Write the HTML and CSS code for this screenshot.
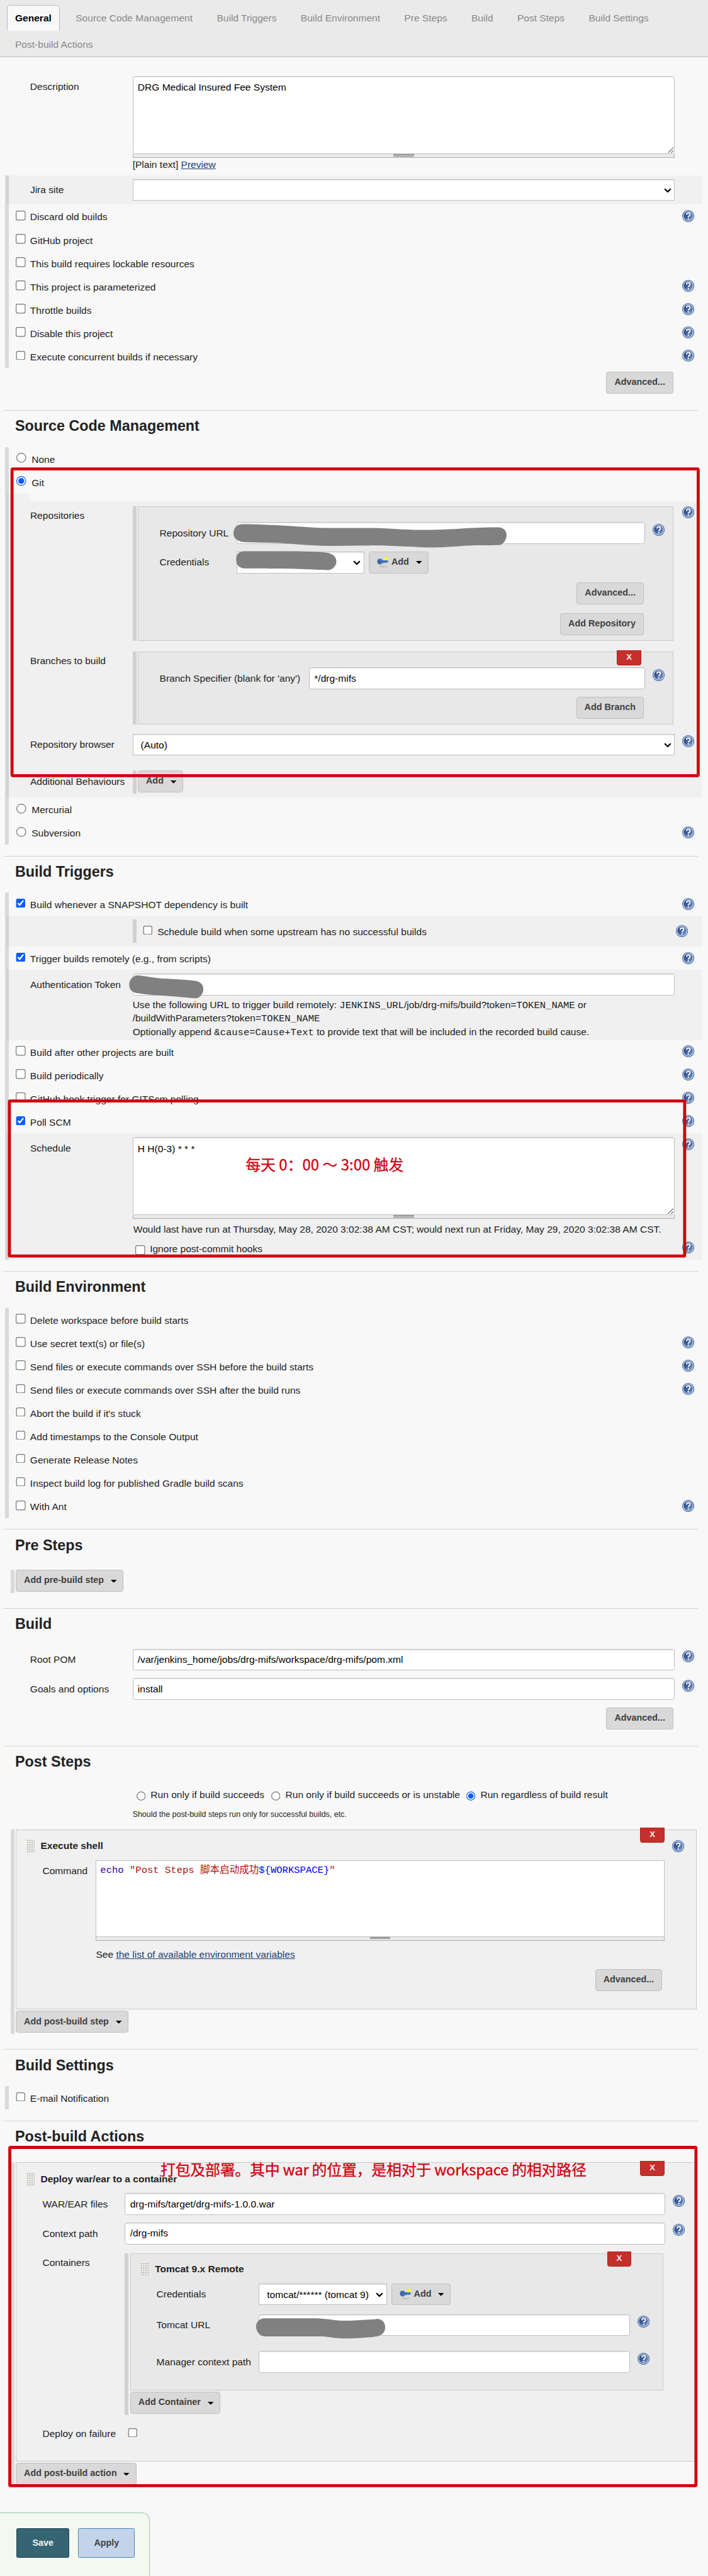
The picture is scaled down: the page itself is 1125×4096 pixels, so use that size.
FILE: index.html
```html
<!DOCTYPE html>
<html lang="en">
<head>
<meta charset="utf-8">
<title>drg-mifs Config [Jenkins]</title>
<link rel="stylesheet" href="styles.css">
</head>
<body>
<svg class="defs" aria-hidden="true">
  <defs>
    <linearGradient id="g-help" x1="0" y1="0" x2="1" y2="1"><stop offset="0.15" stop-color="#1d3d7c"/><stop offset="1" stop-color="#7f9fd0"/></linearGradient>
    <symbol id="i-help" viewBox="0 0 16 16">
      <circle cx="8" cy="8" r="8" fill="#4a6da6"/>
      <circle cx="8" cy="8" r="6.5" fill="url(#g-help)" stroke="#c9d6ea" stroke-width="1.1"/>
      <path d="M5.7 6.2C5.7 4.6 6.7 3.8 8.1 3.8s2.4.8 2.4 2.1c0 1.6-2.3 1.8-2.3 3.8" fill="none" stroke="#fff" stroke-width="1.6"/>
      <rect x="7.2" y="10.9" width="1.8" height="1.8" fill="#fff"/>
    </symbol>
    <symbol id="i-key" viewBox="0 0 16 16">
      <ellipse cx="8" cy="14" rx="6" ry="1" fill="#bdbdbd"/>
      <circle cx="12.3" cy="3.2" r="2.4" fill="#fbf43c"/>
      <path d="M3.8 3.6c2 0 3.2 1 3.6 2.2h7.2v2.8l-1 .5-.9-.7-1 .9-1-.7-1 .7H7.2c-.6 1.2-1.8 2-3.4 2C1.700 11.300.3 9.700.3 7.500s1.400-3.900 3.500-3.900z" fill="#4272b8"/>
      <circle cx="3" cy="7.500" r="1.200" fill="#2d5288"/>
    </symbol>
    <symbol id="i-chev" viewBox="0 0 10 6"><path d="M1 1l4 4 4-4" fill="none" stroke="#000" stroke-width="1.900"/></symbol>
    <symbol id="i-tri" viewBox="0 0 8 4"><path d="M0 0h8L4 4z" fill="#000"/></symbol>
    <symbol id="i-size" viewBox="0 0 8 8"><path d="M0.500 7.500l7-7M4.500 7.500l3-3" fill="none" stroke="#555" stroke-width="0.900"/></symbol>
  </defs>
</svg>
<div class="page">
  <nav class="tabs">
    <a class="tab active">General</a><a class="tab">Source Code Management</a><a class="tab">Build Triggers</a><a class="tab">Build Environment</a><a class="tab">Pre Steps</a><a class="tab">Build</a><a class="tab">Post Steps</a><a class="tab">Build Settings</a><a class="tab">Post-build Actions</a>
  </nav>

  <section class="general">
    <div class="field">
      <label>Description</label>
      <div>
        <div class="textarea">DRG Medical Insured Fee System<svg class="size"><use href="#i-size"/></svg></div>
        <div class="handle"><i></i></div>
        <p class="markup">[Plain text] <a>Preview</a></p>
      </div>
    </div>
    <div class="opts">
      <div class="shade padded"><div class="field"><label>Jira site</label><div class="select"><svg class="chev"><use href="#i-chev"/></svg></div></div></div>
      <div class="row"><input type="checkbox"><span>Discard old builds</span><svg class="help"><use href="#i-help"/></svg></div>
      <div class="row"><input type="checkbox"><span>GitHub project</span></div>
      <div class="row"><input type="checkbox"><span>This build requires lockable resources</span></div>
      <div class="row"><input type="checkbox"><span>This project is parameterized</span><svg class="help"><use href="#i-help"/></svg></div>
      <div class="row"><input type="checkbox"><span>Throttle builds</span><svg class="help"><use href="#i-help"/></svg></div>
      <div class="row"><input type="checkbox"><span>Disable this project</span><svg class="help"><use href="#i-help"/></svg></div>
      <div class="row"><input type="checkbox"><span>Execute concurrent builds if necessary</span><svg class="help"><use href="#i-help"/></svg></div>
    </div>
    <div class="actions top5"><button>Advanced...</button></div>
  </section>

  <section class="after-button">
    <h2>Source Code Management</h2>
    <div class="opts">
      <div class="row radio"><input type="radio" name="scm"><span>None</span></div>
      <div class="row radio"><input type="radio" name="scm" checked><span>Git</span></div>
      <div class="shade stub"></div>
      <div class="shade git">
        <div class="field group-field">
          <label>Repositories</label>
          <div class="group">
            <div class="box repo">
              <div class="field"><label>Repository URL</label><div class="input"></div><svg class="help"><use href="#i-help"/></svg></div>
              <div class="field"><label>Credentials</label><div class="inline"><div class="select cred"><svg class="chev"><use href="#i-chev"/></svg></div><button class="key"><svg class="k"><use href="#i-key"/></svg>Add<svg class="tri"><use href="#i-tri"/></svg></button></div></div>
              <div class="actions"><button>Advanced...</button></div>
              <div class="actions"><button>Add Repository</button></div>
            </div>
          </div>
          <svg class="help"><use href="#i-help"/></svg>
        </div>
        <div class="field group-field branches">
          <label>Branches to build</label>
          <div class="group">
            <div class="box branch">
              <span class="delete">X</span>
              <div class="field"><label>Branch Specifier (blank for 'any')</label><div class="input">*/drg-mifs</div><svg class="help"><use href="#i-help"/></svg></div>
              <div class="actions"><button>Add Branch</button></div>
            </div>
          </div>
        </div>
        <div class="field browser"><label>Repository browser</label><div class="select">(Auto)<svg class="chev"><use href="#i-chev"/></svg></div><svg class="help"><use href="#i-help"/></svg></div>
        <div class="field additional"><label>Additional Behaviours</label><div class="group"><button>Add<svg class="tri"><use href="#i-tri"/></svg></button></div></div>
      </div>
      <div class="row radio"><input type="radio" name="scm"><span>Mercurial</span></div>
      <div class="row radio"><input type="radio" name="scm"><span>Subversion</span><svg class="help"><use href="#i-help"/></svg></div>
    </div>
  </section>

  <section>
    <h2>Build Triggers</h2>
    <div class="opts">
      <div class="row"><input type="checkbox" checked><span>Build whenever a SNAPSHOT dependency is built</span><svg class="help"><use href="#i-help"/></svg></div>
      <div class="shade padded"><div class="upstream"><div class="row"><input type="checkbox"><span>Schedule build when some upstream has no successful builds</span><svg class="help"><use href="#i-help"/></svg></div></div></div>
      <div class="row"><input type="checkbox" checked><span>Trigger builds remotely (e.g., from scripts)</span><svg class="help"><use href="#i-help"/></svg></div>
      <div class="shade padded token">
        <div class="field"><label>Authentication Token</label>
          <div><div class="input"></div>
            <p>Use the following URL to trigger build remotely: <code>JENKINS_URL</code>/job/drg-mifs/build?token=<code>TOKEN_NAME</code> or<br>/buildWithParameters?token=<code>TOKEN_NAME</code><br>Optionally append <code>&amp;cause=Cause+Text</code> to provide text that will be included in the recorded build cause.</p>
          </div>
        </div>
      </div>
      <div class="row"><input type="checkbox"><span>Build after other projects are built</span><svg class="help"><use href="#i-help"/></svg></div>
      <div class="row"><input type="checkbox"><span>Build periodically</span><svg class="help"><use href="#i-help"/></svg></div>
      <div class="row"><input type="checkbox"><span>GitHub hook trigger for GITScm polling</span><svg class="help"><use href="#i-help"/></svg></div>
      <div class="row"><input type="checkbox" checked><span>Poll SCM</span><svg class="help"><use href="#i-help"/></svg></div>
      <div class="shade padded poll">
        <div class="field"><label>Schedule</label>
          <div>
            <div class="textarea">H H(0-3) * * *<svg class="size"><use href="#i-size"/></svg></div>
            <div class="handle"><i></i></div>
            <p>Would last have run at Thursday, May 28, 2020 3:02:38 AM CST; would next run at Friday, May 29, 2020 3:02:38 AM CST.</p>
          </div>
          <svg class="help"><use href="#i-help"/></svg>
        </div>
        <div class="ignore"><input type="checkbox"><span>Ignore post-commit hooks</span><svg class="help"><use href="#i-help"/></svg></div>
      </div>
    </div>
  </section>

  <section>
    <h2>Build Environment</h2>
    <div class="opts">
      <div class="row"><input type="checkbox"><span>Delete workspace before build starts</span></div>
      <div class="row"><input type="checkbox"><span>Use secret text(s) or file(s)</span><svg class="help"><use href="#i-help"/></svg></div>
      <div class="row"><input type="checkbox"><span>Send files or execute commands over SSH before the build starts</span><svg class="help"><use href="#i-help"/></svg></div>
      <div class="row"><input type="checkbox"><span>Send files or execute commands over SSH after the build runs</span><svg class="help"><use href="#i-help"/></svg></div>
      <div class="row"><input type="checkbox"><span>Abort the build if it's stuck</span></div>
      <div class="row"><input type="checkbox"><span>Add timestamps to the Console Output</span></div>
      <div class="row"><input type="checkbox"><span>Generate Release Notes</span></div>
      <div class="row"><input type="checkbox"><span>Inspect build log for published Gradle build scans</span></div>
      <div class="row"><input type="checkbox"><span>With Ant</span><svg class="help"><use href="#i-help"/></svg></div>
    </div>
  </section>

  <section class="pre-steps">
    <h2>Pre Steps</h2>
    <div class="steps"><button>Add pre-build step<svg class="tri"><use href="#i-tri"/></svg></button></div>
  </section>

  <section class="build">
    <h2>Build</h2>
    <div class="field"><label>Root POM</label><div class="input">/var/jenkins_home/jobs/drg-mifs/workspace/drg-mifs/pom.xml</div><svg class="help"><use href="#i-help"/></svg></div>
    <div class="field"><label>Goals and options</label><div class="input">install</div><svg class="help"><use href="#i-help"/></svg></div>
    <div class="actions"><button>Advanced...</button></div>
  </section>

  <section class="after-button">
    <h2>Post Steps</h2>
    <div class="run-if">
      <input type="radio" name="run"><span class="r1">Run only if build succeeds</span>
      <input type="radio" name="run"><span class="r2">Run only if build succeeds or is unstable</span>
      <input type="radio" name="run" checked><span>Run regardless of build result</span>
    </div>
    <p class="note">Should the post-build steps run only for successful builds, etc.</p>
    <div class="steps">
      <div class="box step shell">
        <span class="delete">X</span>
        <div class="title"><i class="grip"></i><b>Execute shell</b><svg class="help"><use href="#i-help"/></svg></div>
        <div class="field"><label>Command</label>
          <div>
            <div class="editor"><span class="cmd">echo</span> <span class="str">"Post Steps 脚本启动成功</span><span class="var">${WORKSPACE}</span><span class="str">"</span></div>
            <div class="handle"><i></i></div>
            <p>See <a>the list of available environment variables</a></p>
          </div>
        </div>
        <div class="actions"><button>Advanced...</button></div>
      </div>
      <button>Add post-build step<svg class="tri"><use href="#i-tri"/></svg></button>
    </div>
  </section>

  <section class="after-steps">
    <h2>Build Settings</h2>
    <div class="opts"><div class="row"><input type="checkbox"><span>E-mail Notification</span></div></div>
  </section>

  <section class="post-build">
    <h2>Post-build Actions</h2>
    <div class="steps">
      <div class="box step deploy">
        <span class="delete">X</span>
        <div class="title"><i class="grip"></i><b>Deploy war/ear to a container</b></div>
        <div class="field"><label>WAR/EAR files</label><div class="input">drg-mifs/target/drg-mifs-1.0.0.war</div><svg class="help"><use href="#i-help"/></svg></div>
        <div class="field"><label>Context path</label><div class="input">/drg-mifs</div><svg class="help"><use href="#i-help"/></svg></div>
        <div class="field group-field"><label>Containers</label>
          <div class="group">
            <div class="box tomcat">
              <span class="delete">X</span>
              <div class="title"><i class="grip"></i><b>Tomcat 9.x Remote</b></div>
              <div class="field"><label>Credentials</label><div class="inline"><div class="select cred">tomcat/****** (tomcat 9)<svg class="chev"><use href="#i-chev"/></svg></div><button class="key"><svg class="k"><use href="#i-key"/></svg>Add<svg class="tri"><use href="#i-tri"/></svg></button></div></div>
              <div class="field"><label>Tomcat URL</label><div class="input"></div><svg class="help"><use href="#i-help"/></svg></div>
              <div class="field"><label>Manager context path</label><div class="input"></div><svg class="help"><use href="#i-help"/></svg></div>
            </div>
            <button>Add Container<svg class="tri"><use href="#i-tri"/></svg></button>
          </div>
        </div>
        <div class="field failure"><label>Deploy on failure</label><input type="checkbox"></div>
      </div>
      <button>Add post-build action<svg class="tri"><use href="#i-tri"/></svg></button>
    </div>
  </section>

  <div class="savebar"><button class="save">Save</button><button class="apply">Apply</button></div>

  <svg class="marks" viewBox="0 0 940 3422" aria-hidden="true">
    <g class="blot">
      <path d="M321 696.500C334 696 350 697 362 697.500S400 700 420 701S470 701 495 701.500S535 704 557 704S600 703 615 702S650 700.700 662 700.700C668 701 672.600 705 672.600 711S668 724 662 724.300S630 724 617 725S590 727.300 575 727.300S555 726.500 540 726S515 724.500 498 724.600S450 725.500 426 725S390 722.500 372 721.600S335 721 322 720C315 719 310 715 310 709S313 697 321 696.500Z"/>
      <path d="M323 732.400H384C405 732.500 425 733 435 734.500C442 736 446.600 740 446.600 746S441 757.500 436 757.400S410 756.500 396 756S345 755.500 323 755.200C317 754 313.500 750 313.500 743.500S317 733 323 732.400Z"/>
      <path d="M183 1296C190 1296.500 200 1298.500 210 1299.500S245 1301 261 1303.500C267 1305 270 1309 270 1314.500S265 1326.500 260 1326.300S225 1323 210 1322.300S190 1320.500 181 1319.400C175 1318 171.500 1314 171.500 1308S177 1295.500 183 1296Z"/>
      <path d="M350 3080H415C435 3080 443 3083.300 458.600 3083.300S480 3082 490 3081.800S498 3081 502 3081C508 3082 511.400 3086 511.400 3092S508 3102 502 3103.700S475 3106.800 458.600 3106.800S440 3104.500 425.600 3104H350.700C344 3103 340 3097 340 3091S344 3081 350 3080Z"/>
    </g>
    <g class="frame">
      <rect x="16" y="623" width="911" height="407.500" rx="1"/>
      <rect x="12.500" y="1462.700" width="896.500" height="206" rx="1"/>
      <rect x="13" y="2853" width="911" height="449.500" rx="1"/>
    </g>
  </svg>
  <p class="memo memo-cron">每天 0：00 ～ 3:00 触发</p>
  <p class="memo memo-war">打包及部署。其中 war 的位置，是相对于 workspace 的相对路径</p>
</div>
</body>
</html>
```
FILE: styles.css
```css
* { box-sizing: border-box; }
body { margin: 0; background: #f8f8f8; }
.defs { position: absolute; width: 0; height: 0; }

.page {
  zoom: 1.19681;
  position: relative;
  width: 940px;
  height: 3422.4px;
  overflow: hidden;
  background: #f8f8f8;
  color: #222;
  font: 13px/18px "Liberation Sans", Arial, "Noto Sans CJK SC", sans-serif;
}
p { margin: 0; }
a { color: #204070; }
p a { text-decoration: underline; }
svg { display: block; }

/* tabs */
.tabs {
  display: flex;
  flex-wrap: wrap;
  column-gap: 10px;
  height: 76px;
  padding: 7px 9px 0;
  background: #eaeaea;
  border-bottom: 1px solid #bbb;
}
.tab {
  height: 35px;
  padding: 7.5px 10.2px 0;
  border: 1px solid transparent;
  border-bottom: 0;
  color: #888;
}
.tab.active {
  height: 34px;
  background: #f8f8f8;
  border-color: #bbb;
  border-radius: 4px 4px 0 0;
  color: #000;
  font-weight: bold;
}

/* sections */
section { position: relative; padding-top: 15px; }
section.general { padding-top: 25px; }
section.after-button { padding-top: 22px; }
section.after-steps { padding-top: 20px; }
h2 {
  height: 49px;
  margin: 0 13px 0 4px;
  padding: 8.500px 0 0 16px;
  border-top: 1px solid #d3d3d3;
  font-size: 19.500px;
  line-height: 24px;
}
.opts { width: 925px; margin-left: 7px; border-left: 5.02px solid #d9d9d9; }
.row { display: flex; height: 31px; padding-left: 9px; }
.row span { flex: 1; margin-left: 6px; padding-top: 7.500px; }
input { accent-color: #0b5cff; width: 13px; height: 13px; margin: 0; flex: none; }
.row input { margin-top: 8px; }
.row.radio { padding-left: 10px; }
.row.radio span { margin-left: 7px; }
.help { width: 16px; height: 16px; flex: none; }
.row .help { margin: 7px 10px 0 0; }

/* label, control and help columns */
.field {
  display: grid;
  grid-template-columns: 136px 720px 26px;
  align-items: start;
  margin-left: 40px;
}
.opts .field { margin-left: 28px; }
.field > label { padding-top: 5.500px; white-space: nowrap; }
.field > .help { margin-top: 2px; justify-self: end; }
.group-field > label { padding-top: 3.500px; }
.group-field > .help { margin-top: 0; }

.input, .select, .textarea {
  position: relative;
  height: 29px;
  padding: 4.500px 6px 0;
  background: #fff;
  border: 1px solid #bfbfbf;
  border-radius: 3px;
  box-shadow: inset 0 1px 1px rgba(0, 0, 0, .09);
  color: #000;
}
.select { padding-left: 10px; border-radius: 0; padding-top: 5px; }
.chev { position: absolute; right: 4px; top: 11px; width: 10px; height: 6px; }
.textarea { height: 104px; padding-top: 5.500px; }
.size { position: absolute; right: 1px; bottom: 1px; width: 8px; height: 8px; }
.handle {
  display: flex;
  justify-content: center;
  height: 5px;
  background: #ebebeb;
  border: solid #aeaca5;
  border-width: 0 1px 1px;
}
.handle i { width: 27px; height: 3px; background: #bbb; border: solid #888; border-width: 1px 0; }
.markup { height: 23px; }

button {
  display: inline-flex;
  align-items: center;
  height: 29px;
  padding: 0 10px 2px;
  background: #d9d9d9;
  border: 1px solid #bfbfbf;
  border-radius: 3px;
  color: #404040;
  font: bold 12px "Liberation Sans", Arial, sans-serif;
  white-space: nowrap;
}
.tri { width: 8px; height: 4px; margin: 3px -2px 0 9px; }
.key { margin-left: 6px; }
.k { width: 16px; height: 16px; margin: 1px 3px 0 0; }
.inline { display: flex; }
.cred { width: 170px; }
.actions { display: flex; justify-content: flex-end; }
.actions.top5 { margin-top: 5px; }
.general > .actions, .build > .actions { width: 894px; }

.shade { margin-left: -4px; padding-left: 4px; background: rgba(0, 0, 0, .033); }
.padded { padding-top: 5px; padding-bottom: 5px; }

/* repeatable groups */
.group { border-left: 5.02px solid rgba(0, 0, 0, .13); padding-left: 2px; }
.box { position: relative; background: rgba(0, 0, 0, .03); border: 1px solid #cacaca; }
.delete {
  position: absolute;
  top: -3px;
  right: 42px;
  width: 32px;
  height: 20px;
  background: #c4302b;
  border: 1px solid #b2211d;
  border-radius: 0 0 3px 3px;
  color: #f3e9e9;
  font: bold 11px/17px "Liberation Sans", Arial, sans-serif;
  text-align: center;
}

/* Git */
.stub { width: 32px; height: 10px; }
.git { height: 394px; padding-top: 7px; }
.box.repo, .box.branch { width: 711px; padding-top: 20px; }
.repo { height: 179px; }
.branch { height: 97px; }
.repo .field, .branch .field { margin-left: 28px; margin-bottom: 10px; }
.repo .field { grid-template-columns: 102px 543px 26px; }
.branch .field { grid-template-columns: 198.500px 446.500px 26px; }
.repo .actions { margin: 12px 38.500px 0 0; }
.branch .actions { margin-right: 38.500px; }
.branches { margin-top: 14px; }
.browser { margin-top: 12px; }
.additional { margin-top: 20px; }
.additional .group { height: 31px; }

/* triggers */
.upstream { margin-left: 164px; width: 735.500px; border-left: 5.02px solid #d0d0d0; }
.upstream .row .help { margin-right: -1.500px; }
.token { height: 93px; }
.token p { padding-top: 3px; }
code { font: 13px/10px "Liberation Mono", monospace; }
.poll { height: 168px; }
.poll p { padding: 5px 0 0 1px; white-space: nowrap; height: 25px; }
.ignore { display: flex; margin-left: 168px; }
.ignore input { margin-top: 10px; }
.ignore span { flex: 1; padding: 5.500px 0 0 6px; }
.ignore .help { margin: 5px 10px 0 0; }

/* build */
.pre-steps h2 { height: 54px; }
.build { padding-top: 20px; }
.build h2 { height: 54px; }
.build .field { margin-bottom: 10px; }

.steps { margin-left: 14px; border-left: 5.02px solid #d9d9d9; padding-left: 2px; }
.steps > button { margin-bottom: 2px; vertical-align: top; }
.run-if { display: flex; height: 47px; padding: 7px 0 0 181px; }
.run-if input { margin-top: 4.500px; }
.run-if span { margin-left: 6px; }
.run-if .r1 { width: 160px; }
.run-if .r2 { width: 240px; }
.note { height: 15px; padding-left: 176px; font-size: 10.400px; line-height: 14px; margin-top: -12px; margin-bottom: 12px; }

.step { width: 904px; margin-bottom: 2px; }
.title { display: flex; height: 28px; padding: 11.500px 0 0 13px; }
.title b { flex: 1; margin-left: 8px; }
.title .help { margin: 2px 16px 0 0; }
.grip {
  width: 11px;
  height: 18px;
  margin-top: .5px;
  background: radial-gradient(circle at 1.500px 2px, #c0c0b8 1px, transparent 1.300px) 0 0 / 3px 3px #f6f6f6;
}
.step .field { margin-left: 34.500px; }
.step .actions { margin-right: 45px; }
.step > .delete { right: 42px; }

.shell { height: 239px; }
.shell .title { height: 40px; }
.shell .field { grid-template-columns: 71px 755px; height: 145px; }
.editor {
  height: 102px;
  padding: 4px 5px;
  background: #fff;
  border: 1px solid #bfbfbf;
  font: 13px/18px "Liberation Mono", "Noto Sans CJK SC", monospace;
  white-space: pre;
}
.cmd { color: #30a; }
.str { color: #a11; }
.var { color: #00f; }
.shell p { padding-top: 9.500px; }

.post-build h2 { height: 55.5px; }
.deploy { height: 397px; }
.deploy .title { height: 40px; }
.deploy > .title { padding-top: 12px; }
.deploy > .field { grid-template-columns: 109.500px 717px 26px; margin-bottom: 10px; }
.deploy .group { height: 215px; margin-top: 2px; }
.deploy .group-field > label { padding-top: 5.500px; }
.deploy > .group-field { margin-bottom: 11px; }
.tomcat { width: 708px; height: 182px; margin-bottom: 2px; }
.tomcat .title { height: 39px; padding-top: 10.500px; }
.tomcat .field { grid-template-columns: 136px 493px 26px; margin-left: 34px; margin-bottom: 12px; }
.tomcat .field + .field + .field { margin-top: 20px; }
.failure input { margin: 6px 0 0 4px; }
.failure label { padding-top: 4.500px; }

/* save bar */
.savebar {
  display: flex;
  gap: 12px;
  width: 199px;
  height: 90px;
  margin-top: 35px;
  padding: 20px 0 0 22px;
  background: #f4f8ee;
  border: solid #99c5ae;
  border-width: 1px 1px 0 0;
  border-radius: 0 10px 0 0;
}
.savebar button { height: 39px; padding: 0; justify-content: center; border-radius: 2px; }
.savebar .save { width: 70px; background: #356473; border-color: #224453; color: #f3f3f3; }
.savebar .apply { width: 75px; background: #c3d4ea; border-color: #5083c1; }

/* annotations drawn over the form */
.marks { position: absolute; left: 0; top: 0; width: 940px; height: 3422px; }
.blot { fill: #808080; }
.frame { fill: none; stroke: #d1000e; stroke-width: 4; }
.memo {
  position: absolute;
  color: #d1000e;
  font: 400 20px/24px "Noto Sans CJK SC", sans-serif;
  -webkit-text-stroke: .25px #d1000e;
  white-space: nowrap;
}
.memo-cron { left: 326px; top: 1535px; }
.memo-war { left: 213px; top: 2870px; letter-spacing: -.2px; }
```
